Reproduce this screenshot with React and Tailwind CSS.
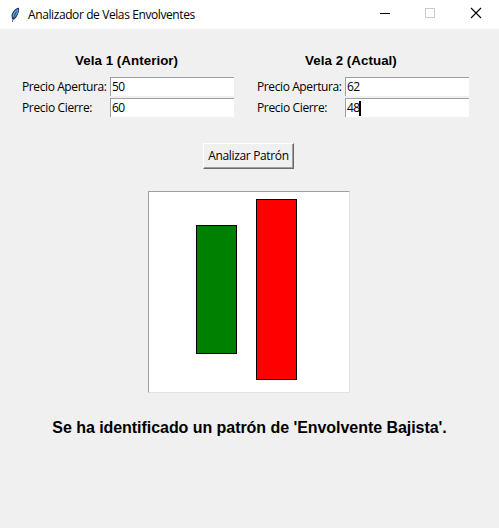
import React from "react";

function Field({ label, value, tracking, focused }) {
  return (
    <div className="flex h-[19px] items-center">
      <label className={`w-[88px] text-[12px] leading-[19px] whitespace-nowrap ${tracking}`}>{label}</label>
      <div className="flex h-[19px] w-[124px] items-center border-t border-l border-[#a0a0a0] bg-white pl-px text-[12px] leading-[18px] tracking-[-0.6px]">
        <span className="w-[12px]">{value}</span>
        {focused && <span className="h-[15px] w-[2px] bg-black" />}
      </div>
    </div>
  );
}

function Candle({ title, titleClass, open, close, focused }) {
  return (
    <section className="w-[212px]">
      <h2 className={`h-[26px] font-['Liberation_Sans',Arial,sans-serif] text-[13.33px] leading-[20px] font-bold whitespace-nowrap ${titleClass}`}>
        {title}
      </h2>
      <div className="flex flex-col gap-[2px]">
        <Field label="Precio Apertura:" value={open} tracking="tracking-[-0.4px]" />
        <Field label="Precio Cierre:" value={close} tracking="tracking-[-0.35px]" focused={focused} />
      </div>
    </section>
  );
}

function Feather() {
  return (
    <svg className="h-4 w-[10px]" viewBox="0 0 10 16">
      <path d="M9 .8C5.500 1.300 2.200 4.500 1.500 8.500L2 12L4 12.500C7 10.500 9.500 5.500 9 .8Z" fill="#1d2c3e" />
      <path d="M8.300 1.800C5.500 2.700 2.800 5.500 2.400 9.200L3 11.300L4 11.300C6.600 9 8.500 5.500 8.300 1.800Z" fill="#5b9fe6" />
      <path d="M6.500 4.500C4.500 8 3.200 11.500 2.300 15" fill="none" stroke="#17212e" strokeWidth=".7" />
    </svg>
  );
}

export default function App() {
  return (
    <div className="h-[528px] w-[499px] overflow-hidden bg-[#f0f0f0] font-['Open_Sans','Noto_Sans',sans-serif] text-black">
      <header className="flex h-[29px] items-center bg-white">
        <div className="flex h-[26px] flex-1 items-center pl-[10px]">
          <Feather />
          <h1 className="ml-2 text-[12px] leading-4 tracking-[-0.4px] whitespace-nowrap">Analizador de Velas Envolventes</h1>
        </div>
        <svg className="h-[29px] w-[139px]" viewBox="0 0 139 29" fill="none" shapeRendering="crispEdges">
          <path d="M20 13.500H30" stroke="#000" />
          <rect x="65.500" y="8.500" width="9" height="9" stroke="#ccc" />
          <path d="M111 8L121 18M121 8L111 18" stroke="#000" strokeWidth="1.100" shapeRendering="auto" />
        </svg>
      </header>
      <main className="flex flex-col items-center pt-[22px]">
        <div className="flex w-full gap-[23px] pl-[22px]">
          <Candle title="Vela 1 (Anterior)" titleClass="pl-[53px] tracking-[0.05px]" open="50" close="60" />
          <Candle title="Vela 2 (Actual)" titleClass="pl-[48px] tracking-[0.05px]" open="62" close="48" focused />
        </div>
        <button className="mt-[26px] mr-[2px] h-[26px] w-[91px] border border-t-white border-r-[#696969] border-b-[#696969] border-l-white text-[12px] leading-[22px] tracking-[-0.35px] whitespace-nowrap shadow-[inset_-1px_-1px_0_#a0a0a0]">
          Analizar Patrón
        </button>
        <div className="mt-[22px] mr-px h-[202px] w-[202px] border border-t-[#a0a0a0] border-r-[#e3e3e3] border-b-[#e3e3e3] border-l-[#a0a0a0] bg-white">
          <svg className="block h-[200px] w-[200px]" viewBox="0 0 200 200" stroke="#000">
            <rect x="47.500" y="33.500" width="40" height="128" fill="#008000" />
            <rect x="107.500" y="7.500" width="40" height="180" fill="#ff0000" />
          </svg>
        </div>
        <p className="mt-[25px] font-['Liberation_Sans',Arial,sans-serif] text-[16px] leading-[20px] font-bold tracking-[-0.05px] whitespace-nowrap">
          Se ha identificado un patrón de 'Envolvente Bajista'.
        </p>
      </main>
    </div>
  );
}
